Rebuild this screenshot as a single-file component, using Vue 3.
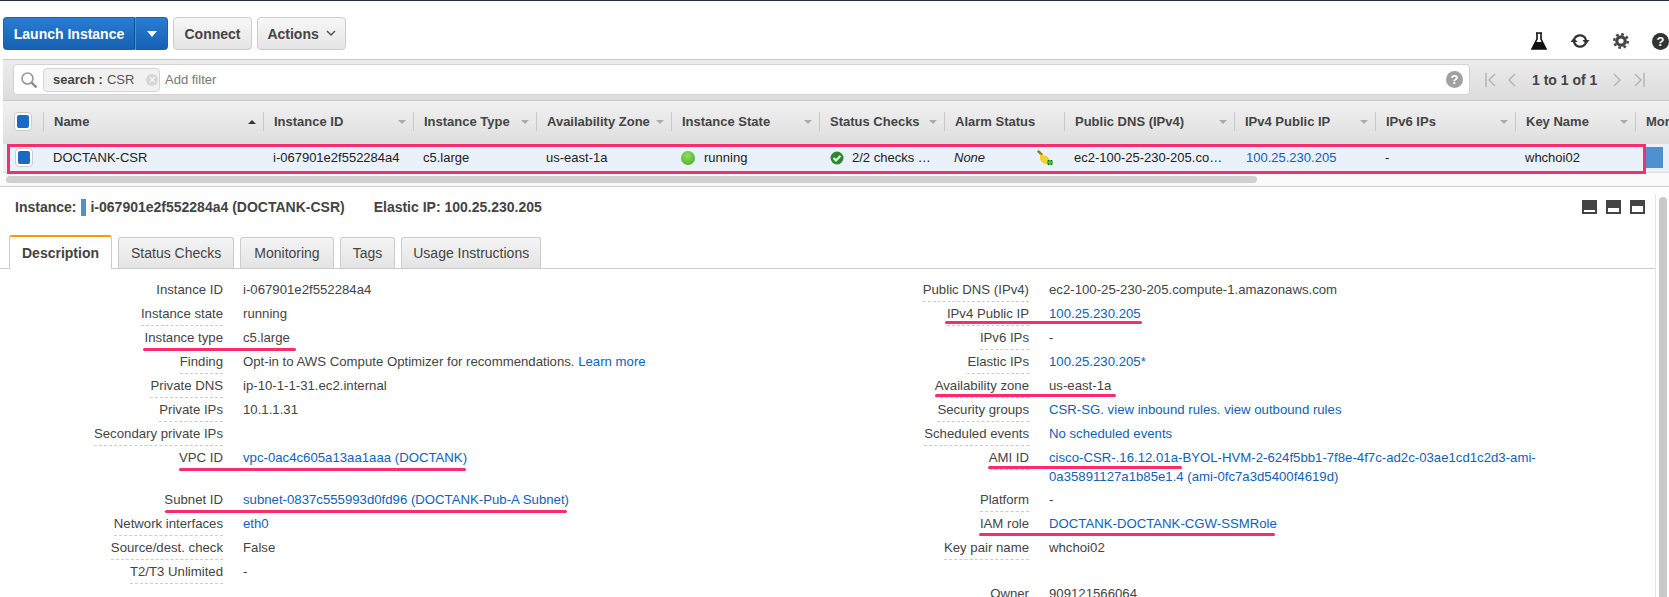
<template>
  <div class="page">
    <div class="toolbar">
      <div class="split">
        <button class="btn-blue main">Launch Instance</button>
        <button class="btn-blue caret"><i class="tri white"></i></button>
      </div>
      <button class="btn connect">Connect</button>
      <button class="btn actions">Actions
        <svg width="10" height="7" viewBox="0 0 10 7"><path d="M1 1l4 4 4-4" fill="none" stroke="#555" stroke-width="1.5"/></svg>
      </button>
      <div class="tools">
        <svg width="16" height="18" viewBox="0 0 16 18"><path d="M5 1h6M6 1v6L1 17h14L10 7V1" fill="none" stroke="#111" stroke-width="1.6"/><path d="M4.4 10h7.2L15 17H1z" fill="#111"/></svg>
        <svg width="20" height="18" viewBox="0 0 20 18"><path d="M4.5 6.5A6.2 6.2 0 0 1 16 8.5" fill="none" stroke="#333" stroke-width="2.2"/><path d="M15.5 11.5A6.2 6.2 0 0 1 4 9.5" fill="none" stroke="#333" stroke-width="2.2"/><path d="M12.5 8h7L16 12.5zM0.5 10h7L4 5.5z" fill="#333"/></svg>
        <svg width="16" height="16" viewBox="0 0 16 16"><circle cx="8" cy="8" r="4.2" fill="none" stroke="#444" stroke-width="3.2"/><circle cx="8" cy="8" r="6.8" fill="none" stroke="#444" stroke-width="2.4" stroke-dasharray="2.7 2.64"/></svg>
        <span class="help dark">?</span>
      </div>
    </div>

    <div class="filterbar">
      <div class="search">
        <svg width="18" height="18" viewBox="0 0 18 18"><circle cx="7.5" cy="7.5" r="5.5" fill="none" stroke="#999" stroke-width="1.6"/><path d="M11.5 11.5l5 5" stroke="#888" stroke-width="2.4"/></svg>
        <span class="chip"><b>search :</b> CSR <i class="chip-x">×</i></span>
        <span class="add">Add filter</span>
        <span class="help gray">?</span>
      </div>
      <div class="pager">
        <svg width="11" height="14" viewBox="0 0 11 14"><path d="M1 0v14M10 1L4 7l6 6" fill="none" stroke="#b5b5b5" stroke-width="1.5"/></svg>
        <svg class="p1" width="8" height="14" viewBox="0 0 8 14"><path d="M7 1L1 7l6 6" fill="none" stroke="#b5b5b5" stroke-width="1.5"/></svg>
        <span class="count">1 to 1 of 1</span>
        <svg width="8" height="14" viewBox="0 0 8 14"><path d="M1 1l6 6-6 6" fill="none" stroke="#b5b5b5" stroke-width="1.5"/></svg>
        <svg class="p3" width="11" height="14" viewBox="0 0 11 14"><path d="M10 0v14M1 1l6 6-6 6" fill="none" stroke="#b5b5b5" stroke-width="1.5"/></svg>
      </div>
    </div>

    <div class="head cols">
      <div class="cbcell"><span class="check"><i></i></span></div>
      <div v-for="c in columns" :key="c.title" class="hcell">
        <span>{{ c.title }}</span>
        <i v-if="c.sort" class="sort" :class="{ up: c.sort === 'up' }"></i>
      </div>
    </div>

    <div class="row cols">
      <div class="cbcell"><span class="check"><i></i></span></div>
      <div class="cell">DOCTANK-CSR</div>
      <div class="cell">i-067901e2f552284a4</div>
      <div class="cell">c5.large</div>
      <div class="cell">us-east-1a</div>
      <div class="cell"><i class="dot"></i>running</div>
      <div class="cell">
        <svg class="ok" width="14" height="14" viewBox="0 0 14 14"><circle cx="7" cy="7" r="6.5" fill="#2b8a2b"/><path d="M3.6 7l2.4 2.5 4.4-4.6" fill="none" stroke="#fff" stroke-width="2"/></svg>
        2/2 checks …
      </div>
      <div class="cell none">None
        <svg class="broom" width="17" height="17" viewBox="0 0 17 17"><path d="M0.8 0.8l4.4 4.4" stroke="#a9761c" stroke-width="2.6"/><path d="M3 4.5l7 1.5 4 5-5 3.5-4-2-2-3.5z" fill="#f2cf3a"/><path d="M10.5 12.5h5M13 10v5" stroke="#0a6b14" stroke-width="4"/><path d="M10.5 12.5h5M13 10v5" stroke="#3bcf3b" stroke-width="1.8"/></svg>
      </div>
      <div class="cell">ec2-100-25-230-205.co…</div>
      <div class="cell ip"><a>100.25.230.205</a></div>
      <div class="cell">-</div>
      <div class="cell">whchoi02</div>
      <div class="cell"><i class="more"></i></div>
    </div>

    <div class="hscroll"><i></i></div>

    <div class="lower">
      <div class="panel">
        <div class="detail-head">
          <b>Instance:</b><i class="marker"></i><b>i-067901e2f552284a4 (DOCTANK-CSR)</b>
          <b class="elastic">Elastic IP: 100.25.230.205</b>
          <div class="views">
            <span class="view"><i class="v1"></i></span>
            <span class="view"><i class="v2"></i></span>
            <span class="view"><i class="v3"></i></span>
          </div>
        </div>

        <div class="tabs">
          <span class="tab active">Description</span>
          <span v-for="t in tabs" :key="t" class="tab">{{ t }}</span>
        </div>

        <div class="desc">
          <div class="desc-col left">
            <div v-for="r in leftRows" :key="r.label" class="drow" :class="{ tall: r.tall }">
              <span class="dlabel"><span :class="{ dashed: !r.plain }">{{ r.label }}</span></span>
              <span class="dvalue"><template v-for="p in r.parts" :key="p.t"><a v-if="p.link">{{ p.t }}</a><template v-else>{{ p.t }}</template></template></span>
            </div>
          </div>
          <div class="desc-col right">
            <div v-for="r in rightRows" :key="r.label" class="drow" :class="{ tall: r.tall, gap: r.gap }">
              <span class="dlabel"><span class="dashed">{{ r.label }}</span></span>
              <span class="dvalue"><template v-for="p in r.parts" :key="p.t"><a v-if="p.link">{{ p.t }}</a><template v-else>{{ p.t }}</template></template></span>
            </div>
          </div>
        </div>
      </div>
      <div class="vscroll"><i></i></div>
    </div>

    <div class="mark-row"></div>
    <i v-for="m in marks" :key="m.top" class="mark" :style="{ left: m.left + 'px', top: m.top + 'px', width: m.width + 'px' }"></i>
  </div>
</template>

<script setup>
const columns = [
  { title: 'Name', sort: 'up' },
  { title: 'Instance ID', sort: 'down' },
  { title: 'Instance Type', sort: 'down' },
  { title: 'Availability Zone', sort: 'down' },
  { title: 'Instance State', sort: 'down' },
  { title: 'Status Checks', sort: 'down' },
  { title: 'Alarm Status' },
  { title: 'Public DNS (IPv4)', sort: 'down' },
  { title: 'IPv4 Public IP', sort: 'down' },
  { title: 'IPv6 IPs', sort: 'down' },
  { title: 'Key Name', sort: 'down' },
  { title: 'Monitoring' },
]

const tabs = ['Status Checks', 'Monitoring', 'Tags', 'Usage Instructions']

const txt = (t) => [{ t }]
const lnk = (t) => [{ t, link: true }]

const leftRows = [
  { label: 'Instance ID', parts: txt('i-067901e2f552284a4'), plain: true },
  { label: 'Instance state', parts: txt('running') },
  { label: 'Instance type', parts: txt('c5.large') },
  { label: 'Finding', parts: [{ t: 'Opt-in to AWS Compute Optimizer for recommendations. ' }, { t: 'Learn more', link: true }] },
  { label: 'Private DNS', parts: txt('ip-10-1-1-31.ec2.internal') },
  { label: 'Private IPs', parts: txt('10.1.1.31') },
  { label: 'Secondary private IPs', parts: [] },
  { label: 'VPC ID', parts: lnk('vpc-0ac4c605a13aa1aaa (DOCTANK)'), tall: true },
  { label: 'Subnet ID', parts: lnk('subnet-0837c555993d0fd96 (DOCTANK-Pub-A Subnet)') },
  { label: 'Network interfaces', parts: lnk('eth0') },
  { label: 'Source/dest. check', parts: txt('False') },
  { label: 'T2/T3 Unlimited', parts: txt('-') },
]

const rightRows = [
  { label: 'Public DNS (IPv4)', parts: txt('ec2-100-25-230-205.compute-1.amazonaws.com') },
  { label: 'IPv4 Public IP', parts: lnk('100.25.230.205') },
  { label: 'IPv6 IPs', parts: txt('-') },
  { label: 'Elastic IPs', parts: lnk('100.25.230.205*') },
  { label: 'Availability zone', parts: txt('us-east-1a') },
  { label: 'Security groups', parts: lnk('CSR-SG. view inbound rules. view outbound rules') },
  { label: 'Scheduled events', parts: lnk('No scheduled events') },
  { label: 'AMI ID', parts: lnk('cisco-CSR-.16.12.01a-BYOL-HVM-2-624f5bb1-7f8e-4f7c-ad2c-03ae1cd1c2d3-ami-0a35891127a1b85e1.4 (ami-0fc7a3d5400f4619d)'), tall: true },
  { label: 'Platform', parts: txt('-') },
  { label: 'IAM role', parts: lnk('DOCTANK-DOCTANK-CGW-SSMRole') },
  { label: 'Key pair name', parts: txt('whchoi02'), gap: true },
  { label: 'Owner', parts: txt('909121566064') },
]

// the pink hand drawn underlines sitting on top of the screenshot
const marks = [
  { left: 143, top: 347, width: 153 },
  { left: 179, top: 467, width: 287 },
  { left: 165, top: 509, width: 402 },
  { left: 945, top: 320, width: 197 },
  { left: 935, top: 393, width: 181 },
  { left: 988, top: 465, width: 194 },
  { left: 979, top: 532, width: 296 },
]
</script>

<style>
html, body { margin: 0; background: #fff; overflow: hidden; }
</style>

<style scoped>
.page {
  position: relative;
  width: 1669px;
  height: 597px;
  overflow: hidden;
  box-sizing: border-box;
  border-top: 1px solid #232f3e;
  font-family: "Liberation Sans", Arial, sans-serif;
  font-size: 13px;
  color: #222;
}
a { color: #0f62b8; }
i { display: block; font-style: normal; }

.toolbar {
  display: flex;
  align-items: flex-end;
  gap: 5px;
  height: 33px;
  padding: 16px 0 9px 3px;
}
.split { display: flex; height: 33px; }
button { font-family: inherit; font-weight: bold; font-size: 14px; height: 33px; padding: 0; cursor: pointer; white-space: nowrap; }
.btn-blue {
  color: #fff;
  background: linear-gradient(#2a7dd3, #1560b2);
  border: 1px solid #1a62ae;
}
.main { width: 132px; border-radius: 4px 0 0 4px; border-right: 1px solid #0f4f94; }
.caret { width: 33px; border-left: 1px solid #4a8ed6; border-radius: 0 4px 4px 0; display: flex; align-items: center; justify-content: center; }
.tri { width: 0; height: 0; border-left: 5px solid transparent; border-right: 5px solid transparent; border-top: 6px solid #fff; }
.btn {
  color: #444;
  background: linear-gradient(#f7f7f7, #e5e5e5);
  border: 1px solid #ccc;
  border-radius: 4px;
}
.connect { width: 79px; }
.actions { width: 89px; }
.btn svg { margin-left: 3px; vertical-align: 2px; }
.tools { margin-left: auto; display: flex; align-items: center; gap: 23px; height: 18px; }
.help {
  width: 17px;
  height: 17px;
  border-radius: 50%;
  color: #fff;
  font-weight: bold;
  font-size: 13px;
  line-height: 17px;
  text-align: center;
  flex: none;
}
.dark { background: #333; }
.gray { background: #a0a0a0; margin-left: auto; margin-right: 6px; }

.filterbar {
  display: flex;
  align-items: center;
  height: 42px;
  box-sizing: border-box;
  margin-left: 3px;
  padding-bottom: 1px;
  background: linear-gradient(#ececec, #dcdcdc);
  border-top: 1px solid #c9c9c9;
  border-bottom: 1px solid #c9c9c9;
}
.search {
  display: flex;
  align-items: center;
  flex: none;
  width: 1457px;
  height: 31px;
  margin-left: 10px;
  box-sizing: border-box;
  padding-left: 6px;
  background: #fff;
  border: 1px solid #d3d3d3;
  border-radius: 4px;
}
.search svg { flex: none; }
.chip {
  display: flex;
  align-items: center;
  gap: 4px;
  height: 24px;
  box-sizing: border-box;
  width: 117px;
  margin-left: 5px;
  padding-left: 9px;
  color: #555;
  background: #f1f1f1;
  border: 1px solid #d5d5d5;
  border-radius: 4px;
}
.chip b { color: #444; }
.chip-x {
  width: 12px;
  height: 12px;
  margin-left: 8px;
  border-radius: 50%;
  background: #d6d6d6;
  color: #fff;
  font-size: 12px;
  line-height: 12px;
  text-align: center;
}
.add { margin-left: 5px; color: #777; }
.pager { display: flex; align-items: center; margin-left: 15px; }
.count { font-weight: bold; font-size: 14px; color: #444; margin: 0 16px; white-space: nowrap; }
.p1 { margin-left: 12px; }
.p3 { margin-left: 13px; }

.cols {
  display: grid;
  grid-template-columns: 40px 220px 150px 123px 135px 148px 125px 120px 170px 141px 140px 120px 40px;
  margin-left: 3px;
}
.head {
  height: 43px;
  box-sizing: border-box;
  padding-bottom: 2px;
  background: linear-gradient(#f1f1f1, #dedede);
  align-items: center;
  overflow: hidden;
}
.cbcell { padding-left: 11px; display: flex; align-items: center; }
.check {
  display: flex;
  align-items: center;
  justify-content: center;
  width: 18px;
  height: 19px;
  box-sizing: border-box;
  background: #fff;
  border: 1px solid #ccc;
  border-radius: 4px;
}
.check i { width: 12px; height: 13px; background: #1a6ac4; border-radius: 2px; }
.hcell {
  display: flex;
  align-items: center;
  height: 19px;
  padding: 0 7px 0 10px;
  border-left: 1px solid #c8c8c8;
  font-weight: bold;
  color: #444;
  white-space: nowrap;
  overflow: hidden;
}
.sort {
  flex: none;
  margin-left: auto;
  width: 0;
  height: 0;
  border-left: 4px solid transparent;
  border-right: 4px solid transparent;
  border-top: 4px solid #aaa;
}
.sort.up { border-top: 0; border-bottom: 4px solid #333; }

.row {
  height: 29px;
  box-sizing: border-box;
  padding-bottom: 1px;
  background: #eaf1fb;
  border-bottom: 1px solid #ddd;
  align-items: center;
}
.row .cbcell { padding-left: 12px; }
.cell { display: flex; align-items: center; padding-left: 10px; white-space: nowrap; color: #222; position: relative; }
.ip { padding-left: 12px; }
.dot {
  width: 14px;
  height: 14px;
  margin-right: 9px;
  border-radius: 50%;
  background: radial-gradient(circle at 45% 35%, #8fe05f, #3fa51e);
}
.ok { margin-right: 8px; margin-left: 1px; }
.none { font-style: italic; }
.broom { position: absolute; right: 10px; top: 50%; margin-top: -8px; }
.more { width: 18px; height: 21px; background: #4f90d0; }

.hscroll {
  height: 13px;
  padding: 3px 0 0 6px;
  box-sizing: border-box;
  background: #fafafa;
}
.hscroll i { width: 1251px; height: 7px; background: #d0d0d0; border-radius: 4px; }

.lower { display: flex; border-top: 1px solid #cfcfcf; height: 410px; }
.panel { width: 1655px; flex: none; }
.detail-head {
  display: flex;
  align-items: center;
  height: 48px;
  padding: 0 10px 8px 15px;
  box-sizing: border-box;
  font-size: 14px;
  color: #444;
}
.marker { width: 5px; height: 17px; margin: 0 4px 0 5px; background: #4f90d0; }
.elastic { margin-left: 29px; }
.views { margin-left: auto; display: flex; gap: 9px; }
.view { display: flex; align-items: flex-end; width: 15px; height: 14px; padding: 2px; box-sizing: border-box; background: #444; }
.view i { width: 11px; background: #fff; }
.v1 { height: 2px; }
.v2 { height: 4px; }
.v3 { height: 6px; }

.tabs {
  display: flex;
  align-items: flex-end;
  gap: 6px;
  height: 34px;
  box-sizing: border-box;
  padding-left: 9px;
  border-bottom: 1px solid #ccc;
}
.tab {
  height: 31px;
  padding: 0 13px;
  box-sizing: border-box;
  font-size: 14px;
  line-height: 30px;
  color: #444;
  background: linear-gradient(#f4f4f4, #e4e4e4);
  border: 1px solid #ccc;
  border-bottom: 0;
  border-radius: 3px 3px 0 0;
}
.tab:nth-child(2) { padding: 0 12px; }
.tab:nth-child(4) { padding: 0 12px; }
.tab:last-child { padding: 0 11px; }
.tab.active {
  height: 34px;
  margin-bottom: -1px;
  padding: 0 12px;
  font-weight: bold;
  line-height: 32px;
  background: #fff;
  border-top: 2px solid #f90;
}

.desc { display: flex; padding-top: 9px; font-size: 13.2px; }
.desc-col.left { width: 840px; }
.desc-col.left .dlabel { width: 223px; }
.desc-col.right .dlabel { width: 189px; }
.desc-col.right { flex: 1; }
.drow { display: flex; align-items: flex-start; min-height: 24px; }
.drow.tall { min-height: 42px; }
.drow.gap { min-height: 46px; }
.dlabel {
  flex: none;
  display: flex;
  justify-content: flex-end;
  height: 24px;
  line-height: 24px;
  color: #444;
}
.dashed { height: 24px; box-sizing: border-box; border-bottom: 1px dashed #ccc; }
.dvalue { padding: 2px 0 0 20px; line-height: 19px; color: #444; max-width: 500px; }
.mark {
  position: absolute;
  height: 3px;
  background: #f72d6d;
  border-radius: 2px;
}
.mark-row {
  position: absolute;
  left: 7px;
  top: 143px;
  width: 1639px;
  height: 30px;
  box-sizing: border-box;
  border: 3px solid #f72d6d;
}
.vscroll {
  flex: 1;
  margin-top: 7px;
  border-left: 1px solid #e6e6e6;
  padding: 3px 0 0 3px;
}
.vscroll i { width: 8px; height: 420px; background: #c9c9c9; border-radius: 4px 4px 0 0; }
</style>
